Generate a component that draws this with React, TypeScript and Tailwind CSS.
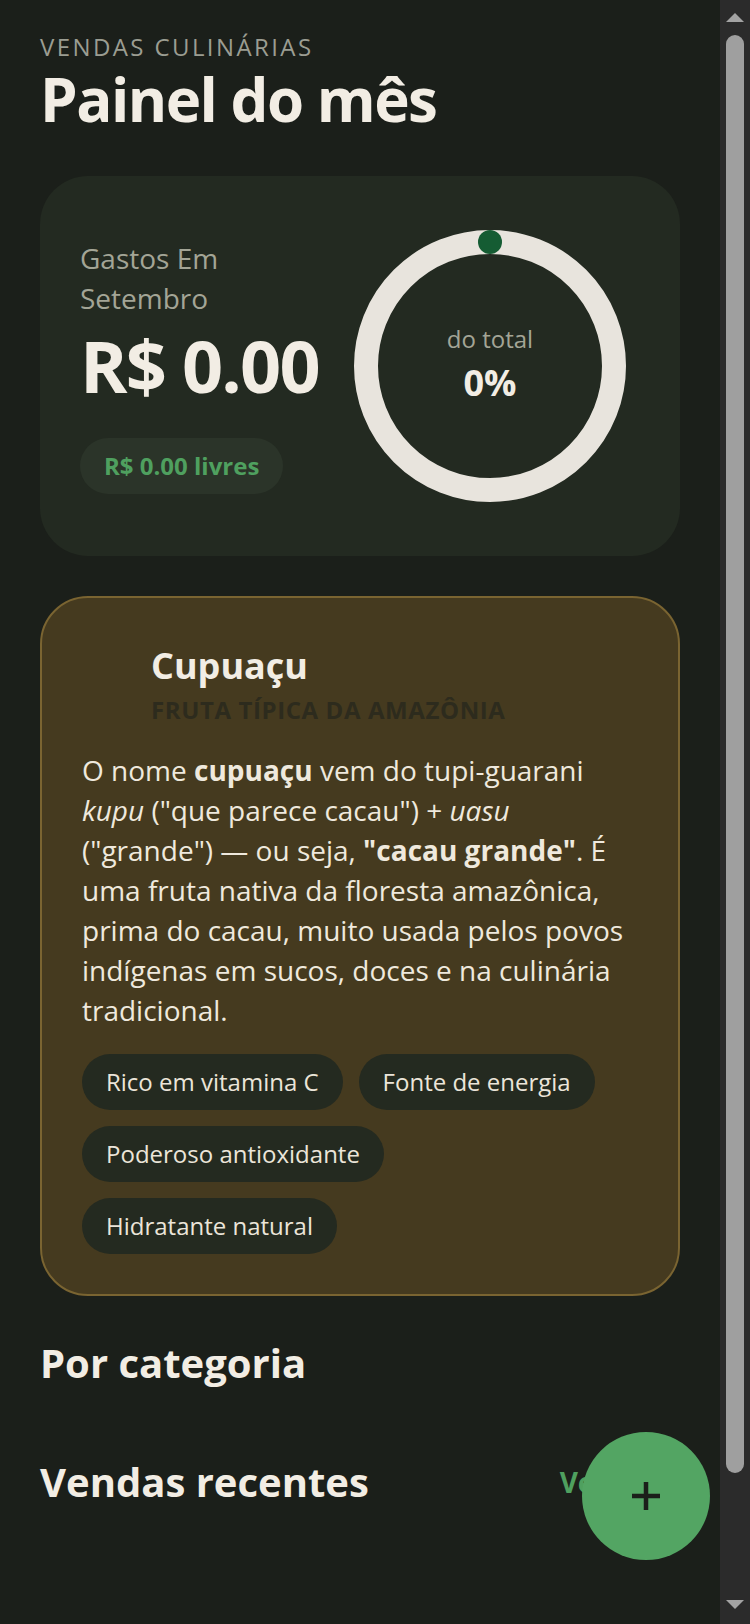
import React from "react";

const chips = [
  "Rico em vitamina C",
  "Fonte de energia",
  "Poderoso antioxidante",
  "Hidratante natural",
];

function Ring() {
  const r = 124;
  const c = 2 * Math.PI * r;
  return (
    <div className="relative w-[300px] h-[300px] shrink-0">
      <svg width="300" height="300" viewBox="0 0 300 300" className="block">
        <circle cx="150" cy="150" r={r} fill="none" stroke="#e8e4dd" strokeWidth="24" />
        <circle
          cx="150"
          cy="150"
          r={r}
          fill="none"
          stroke="#155c33"
          strokeWidth="24"
          strokeLinecap="round"
          strokeDasharray={`0.01 ${c}`}
          transform="rotate(-90 150 150)"
        />
      </svg>
      <div className="absolute inset-0 flex flex-col items-center justify-center pb-[2px]">
        <span className="text-[24px] leading-[32px] text-[#a3a596]">do total</span>
        <span className="mt-[4px] text-[36px] leading-[48px] font-bold text-[#f2ede4]">0%</span>
      </div>
    </div>
  );
}

function Scrollbar() {
  return (
    <div className="w-[30px] h-full bg-[#2b2b2b] flex flex-col items-center shrink-0">
      <svg width="18" height="9" viewBox="0 0 18 9" className="mt-[13px] block">
        <polygon points="9,0 18,9 0,9" fill="#a3a3a3" />
      </svg>
      <div className="mt-[13px] w-[18px] h-[1438px] rounded-full bg-[#9f9f9f]" />
      <div className="flex-1" />
      <svg width="18" height="9" viewBox="0 0 18 9" className="mb-[15px] block">
        <polygon points="0,0 18,0 9,9" fill="#a3a3a3" />
      </svg>
    </div>
  );
}

export default function App() {
  return (
    <div className="w-[750px] h-[1624px] overflow-hidden flex bg-[#1b1f1a] font-['Open_Sans',sans-serif]">
      <main className="relative flex-1 px-[40px] pt-[31px]">
        <p className="text-[24px] leading-[32px] tracking-[0.1em] text-[#9b9d92]">VENDAS CULINÁRIAS</p>
        <h1 className="mt-[4px] text-[60px] leading-[64px] font-bold tracking-[-0.025em] text-[#f2ede4]">
          Painel do mês
        </h1>

        <section className="mt-[45px] h-[380px] rounded-[48px] bg-[#232a21] p-[40px] flex items-center gap-[16px]">
          <div className="flex-1 min-w-0 flex flex-col items-start">
            <p className="text-[28px] leading-[40px] text-[#a3a596]">Gastos Em Setembro</p>
            <p className="mt-[7px] whitespace-nowrap text-[72px] leading-[80px] font-bold tracking-[-0.025em] text-[#f2ede4]">
              R$ 0.00
            </p>
            <span className="mt-[33px] rounded-full bg-[#2b3429] px-[24px] py-[12px] text-[24px] leading-[32px] font-bold text-[#4fa05f] whitespace-nowrap">
              R$ 0.00 livres
            </span>
          </div>
          <Ring />
        </section>

        <section className="mt-[40px] rounded-[48px] border-2 border-[#7a6431] bg-[#453a1f] p-[40px]">
          <div className="flex gap-[24px]">
            <div className="w-[45px] shrink-0" />
            <div className="flex flex-col">
              <h2 className="text-[36px] leading-[56px] font-bold text-[#f2ede4]">Cupuaçu</h2>
              <p className="text-[24px] leading-[32px] font-bold tracking-[0.025em] text-[#2d2b1d]">
                FRUTA TÍPICA DA AMAZÔNIA
              </p>
            </div>
          </div>
          <p className="mt-[24px] text-[28px] leading-[40px] text-[#efe9dd]">
            O nome <strong className="font-bold">cupuaçu</strong> vem do tupi-guarani <em>kupu</em> ("que
            parece cacau") + <em>uasu</em> ("grande") — ou seja, <strong className="font-bold">"cacau grande"</strong>.
            É uma fruta nativa da floresta amazônica, prima do cacau, muito usada pelos povos indígenas em sucos,
            doces e na culinária tradicional.
          </p>
          <div className="mt-[24px] flex flex-wrap gap-[16px]">
            {chips.map((c) => (
              <span
                key={c}
                className="rounded-full bg-[#242a20] px-[24px] py-[12px] text-[24px] leading-[32px] text-[#ebe5d9]"
              >
                {c}
              </span>
            ))}
          </div>
        </section>

        <h2 className="mt-[39px] text-[40px] leading-[56px] font-bold text-[#f2ede4]">Por categoria</h2>

        <div className="mt-[63px] flex items-center justify-between">
          <h2 className="text-[40px] leading-[56px] font-bold text-[#f2ede4]">Vendas recentes</h2>
          <span className="text-[28px] leading-[40px] font-bold text-[#4fa05f]">Ver tudo</span>
        </div>

        <button className="absolute right-[10px] bottom-[64px] w-[128px] h-[128px] rounded-full bg-[#53a563] flex items-center justify-center">
          <svg width="28" height="28" viewBox="0 0 28 28" className="block">
            <path d="M0 14H28M14 0V28" stroke="#1b1f1a" strokeWidth="4.5" />
          </svg>
        </button>
      </main>
      <Scrollbar />
    </div>
  );
}
